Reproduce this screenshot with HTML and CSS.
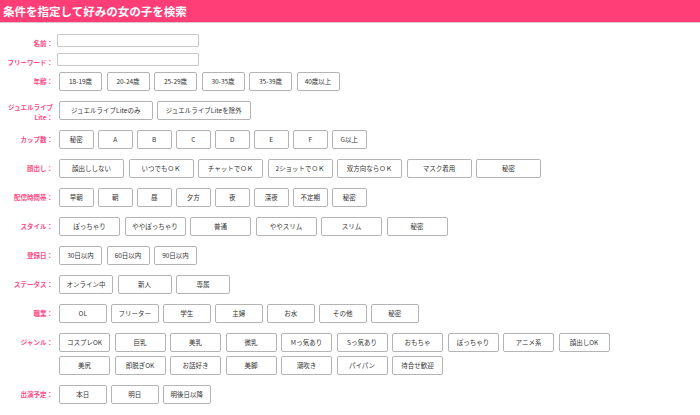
FILE: index.html
```html
<!DOCTYPE html>
<html lang="ja">
<head>
    <meta charset="UTF-8">
    <meta name="viewport" content="width=device-width, initial-scale=1.0">
    <title>女の子検索</title>
    <link rel="stylesheet" href="styles.css">
</head>

<body>
    <h1 class="page-title">条件を指定して好みの女の子を検索</h1>

    <form class="search-form">
        <div class="field field-text">
            <label class="field-label" for="name">名前：</label>
            <input type="text" id="name" class="text-input">
        </div>
        <div class="field field-text">
            <label class="field-label" for="word">フリーワード：</label>
            <input type="text" id="word" class="text-input">
        </div>

        <div class="field">
            <span class="field-label">年齢：</span>
            <div class="options opt-age">
                <button type="button" class="opt">18-19歳</button>
                <button type="button" class="opt">20-24歳</button>
                <button type="button" class="opt">25-29歳</button>
                <button type="button" class="opt">30-35歳</button>
                <button type="button" class="opt">35-39歳</button>
                <button type="button" class="opt">40歳以上</button>
            </div>
        </div>

        <div class="field">
            <span class="field-label label-2line">ジュエルライブ<br>Lite：</span>
            <div class="options opt-lite">
                <button type="button" class="opt">ジュエルライブLiteのみ</button>
                <button type="button" class="opt">ジュエルライブLiteを除外</button>
            </div>
        </div>

        <div class="field">
            <span class="field-label">カップ数：</span>
            <div class="options opt-small">
                <button type="button" class="opt">秘密</button>
                <button type="button" class="opt">A</button>
                <button type="button" class="opt">B</button>
                <button type="button" class="opt">C</button>
                <button type="button" class="opt">D</button>
                <button type="button" class="opt">E</button>
                <button type="button" class="opt">F</button>
                <button type="button" class="opt">G以上</button>
            </div>
        </div>

        <div class="field">
            <span class="field-label">顔出し：</span>
            <div class="options opt-face">
                <button type="button" class="opt">顔出ししない</button>
                <button type="button" class="opt">いつでもＯＫ</button>
                <button type="button" class="opt">チャットでＯＫ</button>
                <button type="button" class="opt">2ショットでＯＫ</button>
                <button type="button" class="opt">双方向ならＯＫ</button>
                <button type="button" class="opt">マスク着用</button>
                <button type="button" class="opt">秘密</button>
            </div>
        </div>

        <div class="field">
            <span class="field-label">配信時間帯：</span>
            <div class="options opt-small">
                <button type="button" class="opt">早朝</button>
                <button type="button" class="opt">朝</button>
                <button type="button" class="opt">昼</button>
                <button type="button" class="opt">夕方</button>
                <button type="button" class="opt">夜</button>
                <button type="button" class="opt">深夜</button>
                <button type="button" class="opt">不定期</button>
                <button type="button" class="opt">秘密</button>
            </div>
        </div>

        <div class="field">
            <span class="field-label">スタイル：</span>
            <div class="options opt-style">
                <button type="button" class="opt">ぽっちゃり</button>
                <button type="button" class="opt">ややぽっちゃり</button>
                <button type="button" class="opt">普通</button>
                <button type="button" class="opt">ややスリム</button>
                <button type="button" class="opt">スリム</button>
                <button type="button" class="opt">秘密</button>
            </div>
        </div>

        <div class="field">
            <span class="field-label">登録日：</span>
            <div class="options opt-age">
                <button type="button" class="opt">30日以内</button>
                <button type="button" class="opt">60日以内</button>
                <button type="button" class="opt">90日以内</button>
            </div>
        </div>

        <div class="field">
            <span class="field-label">ステータス：</span>
            <div class="options opt-status">
                <button type="button" class="opt">オンライン中</button>
                <button type="button" class="opt">新人</button>
                <button type="button" class="opt">専属</button>
            </div>
        </div>

        <div class="field">
            <span class="field-label">職業：</span>
            <div class="options opt-job">
                <button type="button" class="opt">OL</button>
                <button type="button" class="opt">フリーター</button>
                <button type="button" class="opt">学生</button>
                <button type="button" class="opt">主婦</button>
                <button type="button" class="opt">お水</button>
                <button type="button" class="opt">その他</button>
                <button type="button" class="opt">秘密</button>
            </div>
        </div>

        <div class="field">
            <span class="field-label">ジャンル：</span>
            <div class="options opt-genre">
                <button type="button" class="opt">コスプレOK</button>
                <button type="button" class="opt">巨乳</button>
                <button type="button" class="opt">美乳</button>
                <button type="button" class="opt">微乳</button>
                <button type="button" class="opt">Mっ気あり</button>
                <button type="button" class="opt">Sっ気あり</button>
                <button type="button" class="opt">おもちゃ</button>
                <button type="button" class="opt">ぽっちゃり</button>
                <button type="button" class="opt">アニメ系</button>
                <button type="button" class="opt">顔出しOK</button>
                <button type="button" class="opt">美尻</button>
                <button type="button" class="opt">即脱ぎOK</button>
                <button type="button" class="opt">お話好き</button>
                <button type="button" class="opt">美脚</button>
                <button type="button" class="opt">潮吹き</button>
                <button type="button" class="opt">パイパン</button>
                <button type="button" class="opt">待合せ歓迎</button>
            </div>
        </div>

        <div class="field">
            <span class="field-label">出演予定：</span>
            <div class="options opt-job">
                <button type="button" class="opt">本日</button>
                <button type="button" class="opt">明日</button>
                <button type="button" class="opt">明後日以降</button>
            </div>
        </div>
    </form>
</body>
</html>
```

FILE: styles.css
```css
body {
    margin: 0;
    background: #fff;
    font-family: "Noto Sans CJK JP", "Noto Sans", sans-serif;
    color: #333;
}

.page-title {
    margin: 0;
    height: 22px;
    padding-left: 3px;
    background-color: #ff3d77;
    border-bottom: 1px solid #d9c5cb;
    color: #fff;
    font-size: 11.5px;
    font-weight: bold;
    line-height: 22px;
}

.search-form {
    padding-top: 11px;
}

.field {
    display: flex;
    align-items: flex-start;
    margin-bottom: 10px;
}

.field-text {
    margin-bottom: 6px;
}
.field-text + .field:not(.field-text) {
    margin-top: 3px;
}

.field-label {
    flex-shrink: 0;
    width: 53px;
    padding-top: 4px;
    color: #ff4a85;
    font-size: 6.5px;
    font-weight: bold;
    line-height: 10px;
    text-align: right;
}
.field-text .field-label {
    padding-top: 5px;
    line-height: 8px;
}
/* two-line label must not make its row taller than the buttons */
.label-2line {
    height: 19px;
    padding-top: 1px;
    box-sizing: border-box;
}

.text-input {
    width: 142px;
    height: 13px;
    margin-left: 4px;
    padding: 0 3px;
    box-sizing: border-box;
    border: 1px solid #c8c8c8;
    border-radius: 1px;
    font-size: 7px;
}

.options {
    display: flex;
    flex-wrap: wrap;
    gap: 4px 4.5px;
    max-width: 556px;
    margin-left: 6px;
}

.opt {
    height: 19px;
    padding: 0;
    border: 1px solid #b4b4b4;
    border-radius: 2px;
    background-color: #fff;
    color: #333;
    font-family: inherit;
    font-size: 6.5px;
    line-height: 17px;
    text-align: center;
    cursor: pointer;
}
.opt:hover {
    background-color: #fff3f7;
}

.opt-age .opt { width: 43px; }
.opt-lite .opt { width: 93.5px; }
.opt-small .opt { width: 34.5px; }
.opt-face .opt { width: 65px; }
.opt-style .opt { width: 61px; }
.opt-status .opt { width: 54px; }
.opt-job .opt { width: 47.5px; }
.opt-genre .opt { width: 51px; }
```
